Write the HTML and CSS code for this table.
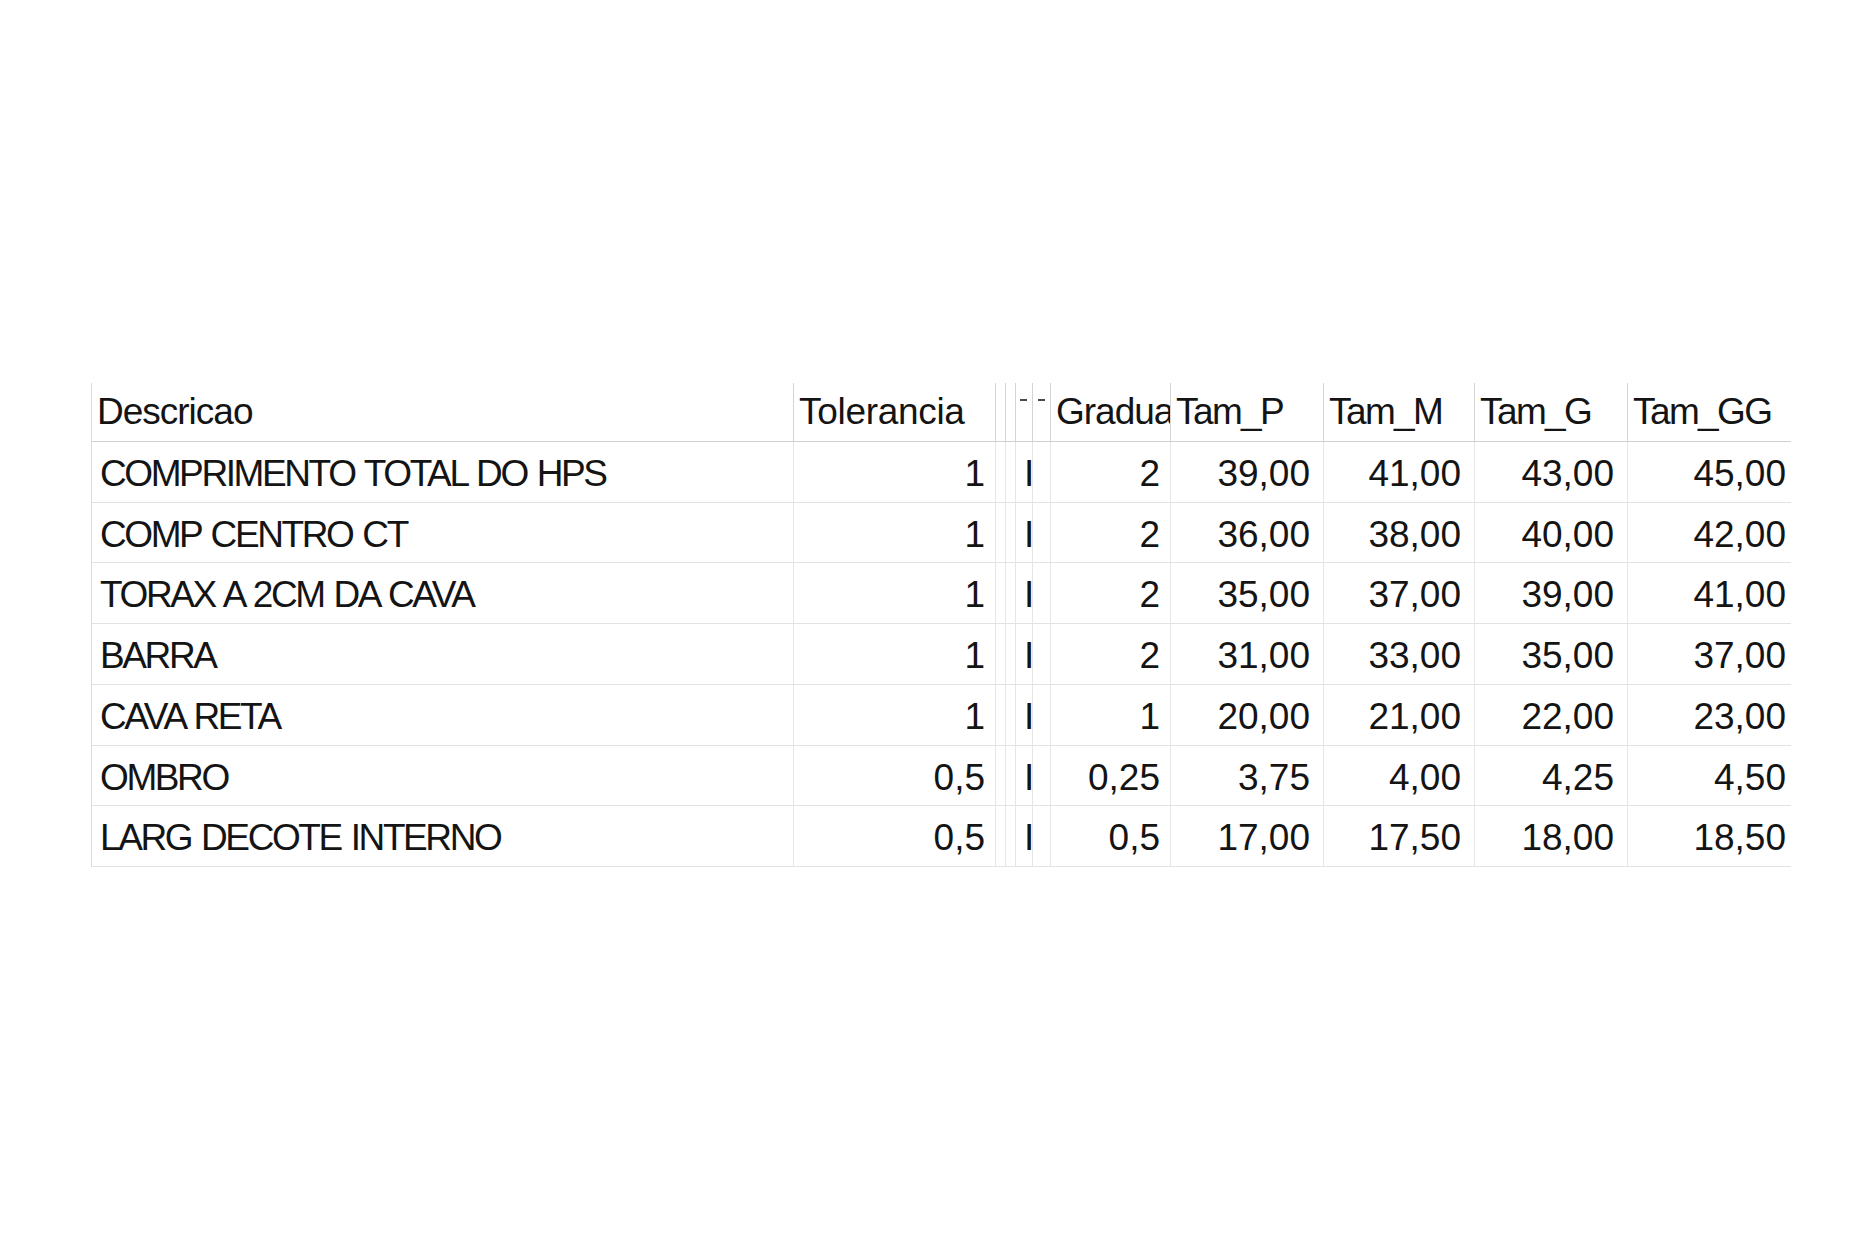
FILE: index.html
```html
<!DOCTYPE html>
<html lang="pt">
<head>
<meta charset="utf-8">
<title>Tabela de medidas</title>
<link rel="stylesheet" href="styles.css">
</head>
<body>
<div class="page">
  <div class="grid">
    <div class="hd c-desc">Descricao</div>
    <div class="hd c-tol">Tolerancia</div>
    <div class="hd c-n1"></div>
    <div class="hd c-n2"></div>
    <div class="hd c-n3"><span class="tick tick-a"></span></div>
    <div class="hd c-n4"><span class="tick tick-b"></span></div>
    <div class="hd c-grad">Graduacao</div>
    <div class="hd c-tam">Tam_P</div>
    <div class="hd c-tam">Tam_M</div>
    <div class="hd c-tam">Tam_G</div>
    <div class="hd c-tam c-last">Tam_GG</div>

    <div class="cl c-desc">COMPRIMENTO TOTAL DO HPS</div>
    <div class="cl num c-tol">1</div>
    <div class="cl c-n1"></div>
    <div class="cl c-n2"></div>
    <div class="cl c-n3 bar">I</div>
    <div class="cl c-n4"></div>
    <div class="cl num c-grad">2</div>
    <div class="cl num c-tam">39,00</div>
    <div class="cl num c-tam">41,00</div>
    <div class="cl num c-tam">43,00</div>
    <div class="cl num c-tam c-last">45,00</div>

    <div class="cl c-desc">COMP CENTRO CT</div>
    <div class="cl num c-tol">1</div>
    <div class="cl c-n1"></div>
    <div class="cl c-n2"></div>
    <div class="cl c-n3 bar">I</div>
    <div class="cl c-n4"></div>
    <div class="cl num c-grad">2</div>
    <div class="cl num c-tam">36,00</div>
    <div class="cl num c-tam">38,00</div>
    <div class="cl num c-tam">40,00</div>
    <div class="cl num c-tam c-last">42,00</div>

    <div class="cl c-desc">TORAX A 2CM DA CAVA</div>
    <div class="cl num c-tol">1</div>
    <div class="cl c-n1"></div>
    <div class="cl c-n2"></div>
    <div class="cl c-n3 bar">I</div>
    <div class="cl c-n4"></div>
    <div class="cl num c-grad">2</div>
    <div class="cl num c-tam">35,00</div>
    <div class="cl num c-tam">37,00</div>
    <div class="cl num c-tam">39,00</div>
    <div class="cl num c-tam c-last">41,00</div>

    <div class="cl c-desc">BARRA</div>
    <div class="cl num c-tol">1</div>
    <div class="cl c-n1"></div>
    <div class="cl c-n2"></div>
    <div class="cl c-n3 bar">I</div>
    <div class="cl c-n4"></div>
    <div class="cl num c-grad">2</div>
    <div class="cl num c-tam">31,00</div>
    <div class="cl num c-tam">33,00</div>
    <div class="cl num c-tam">35,00</div>
    <div class="cl num c-tam c-last">37,00</div>

    <div class="cl c-desc">CAVA RETA</div>
    <div class="cl num c-tol">1</div>
    <div class="cl c-n1"></div>
    <div class="cl c-n2"></div>
    <div class="cl c-n3 bar">I</div>
    <div class="cl c-n4"></div>
    <div class="cl num c-grad">1</div>
    <div class="cl num c-tam">20,00</div>
    <div class="cl num c-tam">21,00</div>
    <div class="cl num c-tam">22,00</div>
    <div class="cl num c-tam c-last">23,00</div>

    <div class="cl c-desc">OMBRO</div>
    <div class="cl num c-tol">0,5</div>
    <div class="cl c-n1"></div>
    <div class="cl c-n2"></div>
    <div class="cl c-n3 bar">I</div>
    <div class="cl c-n4"></div>
    <div class="cl num c-grad">0,25</div>
    <div class="cl num c-tam">3,75</div>
    <div class="cl num c-tam">4,00</div>
    <div class="cl num c-tam">4,25</div>
    <div class="cl num c-tam c-last">4,50</div>

    <div class="cl c-desc">LARG DECOTE INTERNO</div>
    <div class="cl num c-tol">0,5</div>
    <div class="cl c-n1"></div>
    <div class="cl c-n2"></div>
    <div class="cl c-n3 bar">I</div>
    <div class="cl c-n4"></div>
    <div class="cl num c-grad">0,5</div>
    <div class="cl num c-tam">17,00</div>
    <div class="cl num c-tam">17,50</div>
    <div class="cl num c-tam">18,00</div>
    <div class="cl num c-tam c-last">18,50</div>
  </div>
</div>
</body>
</html>
```
FILE: styles.css
```css
html, body {
  margin: 0;
  padding: 0;
  background: #ffffff;
}

.page {
  width: 1876px;
  height: 1251px;
  box-sizing: border-box;
  padding: 383px 0 0 91px;
  font-family: "Liberation Sans", Arial, sans-serif;
  font-size: 37px;
  color: #141414;
}

.grid {
  display: grid;
  grid-template-columns: 702px 202px 10px 10px 17px 18px 120px 153px 151px 153px 163px;
  grid-template-rows: 59px 61px 60px 61px 61px 61px 60px 61px;
  width: max-content;
  border-left: 1px solid #dcdcdc;
}

.hd,
.cl {
  box-sizing: border-box;
  overflow: hidden;
  white-space: nowrap;
  line-height: 42px;
}

.hd {
  border-right: 1px solid #d4d4d4;
  border-bottom: 1px solid #d0d0d0;
  padding: 8px 0 0 5px;
  letter-spacing: -1px;
}

.hd.c-tol {
  letter-spacing: -0.3px;
}

.hd.c-tam {
  letter-spacing: -1.6px;
}

.hd.c-n1,
.hd.c-n2,
.hd.c-n3,
.hd.c-n4 {
  padding: 16px 0 0 0;
}

.tick {
  display: block;
  width: 7px;
  height: 2px;
  background: #4a4a4a;
}

.tick-a {
  margin-left: 4px;
}

.tick-b {
  margin-left: 5px;
}

.cl {
  border-right: 1px solid #e6e6e6;
  border-bottom: 1px solid #e2e2e2;
  padding: 11px 0 0 0;
}

.cl.c-desc {
  padding-left: 8px;
  letter-spacing: -2.4px;
  word-spacing: 2px;
}

.num {
  text-align: right;
}

.cl.c-tol {
  padding-right: 10px;
}

.cl.c-grad {
  padding-right: 10px;
}

.cl.c-tam {
  padding-right: 13px;
}

.cl.bar {
  padding-left: 8px;
}

.c-last {
  border-right: none;
}

.cl.c-last {
  padding-right: 5px;
}
```
